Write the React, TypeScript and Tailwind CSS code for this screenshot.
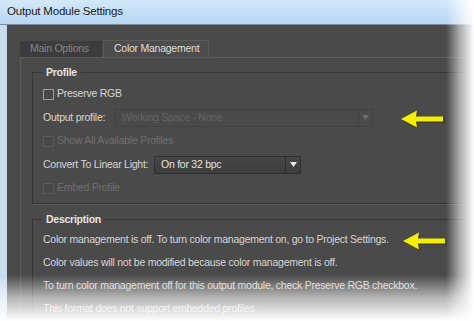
import React from 'react';

const font = { fontFamily: '"Liberation Sans", Arial, sans-serif' };

// Yellow call-out arrow pointing left
const Arrow = () => (
  <svg width="46" height="20" viewBox="0 0 46 20" className="shrink-0">
    <path d="M2 10 L18 1.5 L17 7.5 L44 7.5 L44 12.5 L17 12.5 L18 18.5 Z" fill="#2a2a00" opacity="0.5" transform="translate(1.5 1.5)" />
    <path d="M2 10 L18 1.5 L17 7.5 L44 7.5 L44 12.5 L17 12.5 L18 18.5 Z" fill="#f4ef00" />
  </svg>
);

const Check = ({ label, disabled, focus }: { label: string; disabled?: boolean; focus?: boolean }) => (
  <div className="flex items-center h-[23px]">
    <span
      className={`w-[11px] h-[11px] mr-[3px] border ${
        focus ? 'border-[#b9a23e] bg-[#474747]' : 'border-[#5a5a5a] bg-[#484848]'
      }`}
    />
    <span className={disabled ? 'text-[#6f6f6f]' : 'text-[#d6d6d6]'}>{label}</span>
  </div>
);

export default function App() {
  return (
    <div className="relative w-[474px] h-[321px] overflow-hidden bg-white text-[10.5px] tracking-[-0.25px]" style={font}>
      {/* title bar */}
      <div className="h-[25px] bg-gradient-to-b from-[#d4e9fb] to-[#b6d6f3] border-b border-[#7d8c9a] flex items-center pl-[7px] text-[11.5px] tracking-[-0.2px] text-[#1b1b1b]">
        Output Module Settings
      </div>

      <div className="flex h-[296px]">
        <div className="w-[7px] bg-[#c6dcef]" />
        <div className="flex-1 bg-[#4a4a4a] pt-[15px] pl-[13px]">
          {/* tabs */}
          <div className="flex items-end h-[17px]">
            <div className="w-[82px] h-[16px] bg-[#3c3c3c] text-[#858585] flex items-center pl-[10px]">Main Options</div>
            <div className="w-[106px] h-[17px] ml-[1px] bg-[#4c4c4c] border-t border-x border-[#5c5c5c] text-[#dedede] flex items-center pl-[10px]">
              Color Management
            </div>
          </div>

          {/* tab panel */}
          <div className="border-t border-l border-[#5c5c5c] h-full pl-[11px] pt-[7px]">
            <fieldset className="border border-[#353535] shadow-[1px_1px_0_#5a5a5a] pl-[10px] pb-[3px] mr-[-20px]">
              <legend className="px-[4px] ml-[-1px] font-bold text-[#e4e4e4]">Profile</legend>
              <div className="pt-[2px]">
                <Check label="Preserve RGB" focus />
                <div className="flex items-center h-[24px]">
                  <span className="w-[72px] text-[#d6d6d6] whitespace-nowrap">Output profile:</span>
                  <div className="w-[258px] h-[18px] border border-[#404040] bg-[#4a4a4a] flex items-center">
                    <span className="flex-1 pl-[6px] text-[#646464]">Working Space - None</span>
                    <span className="w-[14px] h-full border-l border-[#404040] flex items-center justify-center">
                      <svg width="7" height="5" viewBox="0 0 7 5"><path d="M0 0 H7 L3.5 5 Z" fill="#6e6e6e" /></svg>
                    </span>
                  </div>
                  <div className="ml-[26px] mt-[2px]">
                    <Arrow />
                  </div>
                </div>
                <Check label="Show All Available Profiles" disabled />
                <div className="flex items-center h-[24px]">
                  <span className="w-[111px] text-[#d6d6d6] whitespace-nowrap">Convert To Linear Light:</span>
                  <div className="w-[147px] h-[18px] border border-[#2f2f2f] bg-gradient-to-b from-[#464646] to-[#3d3d3d] flex items-center">
                    <span className="flex-1 pl-[6px] text-[#e2e2e2]">On for 32 bpc</span>
                    <span className="w-[15px] h-full border-l border-[#2f2f2f] flex items-center justify-center">
                      <svg width="7" height="5" viewBox="0 0 7 5"><path d="M0 0 H7 L3.5 5 Z" fill="#e8e8e8" /></svg>
                    </span>
                  </div>
                </div>
                <Check label="Embed Profile" disabled />
              </div>
            </fieldset>

            <fieldset className="mt-[8px] border border-[#353535] shadow-[1px_1px_0_#5a5a5a] pl-[10px] mr-[-20px] h-[140px]">
              <legend className="px-[4px] ml-[-1px] font-bold text-[#e4e4e4]">Description</legend>
              <div className="text-[#d6d6d6] pt-[1px]">
                <div className="flex items-center h-[23px]">
                  <span>Color management is off. To turn color management on, go to Project Settings.</span>
                  <div className="ml-[12px] mt-[1px]">
                    <Arrow />
                  </div>
                </div>
                <div className="flex items-center h-[23px]">Color values will not be modified because color management is off.</div>
                <div className="flex items-center h-[23px]">To turn color management off for this output module, check Preserve RGB checkbox.</div>
                <div className="flex items-center h-[23px]">This format does not support embedded profiles.</div>
              </div>
            </fieldset>
          </div>
        </div>
      </div>

      {/* torn-edge fades */}
      <div className="absolute top-0 right-0 w-[28px] h-full bg-gradient-to-r from-transparent via-[rgba(255,255,255,0.55)] to-white" />
      <div className="absolute left-0 bottom-0 w-full h-[46px] bg-gradient-to-b from-transparent via-[rgba(255,255,255,0.6)] to-white" />
    </div>
  );
}
